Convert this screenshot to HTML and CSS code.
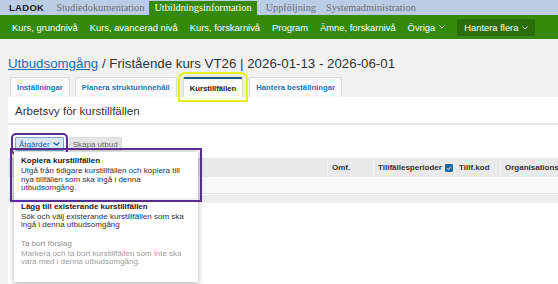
FILE: index.html
```html
<!DOCTYPE html>
<html lang="sv">

<head>
  <meta charset="UTF-8">
  <meta name="viewport" content="width=device-width, initial-scale=1.0">
  <title>Ladok - Utbudsomgång</title>
  <link rel="stylesheet" href="styles.css">
</head>

<body>
  <div class="topbar">
    <span class="logo">LADOK</span>
    <span class="top-tab">Studiedokumentation</span>
    <span class="top-tab active">Utbildningsinformation</span>
    <span class="top-tab">Uppföljning</span>
    <span class="top-tab">Systemadministration</span>
  </div>

  <nav class="mainnav">
    <span class="nav-item">Kurs, grundnivå</span>
    <span class="nav-item">Kurs, avancerad nivå</span>
    <span class="nav-item">Kurs, forskarnivå</span>
    <span class="nav-item">Program</span>
    <span class="nav-item">Ämne, forskarnivå</span>
    <span class="nav-item">Övriga
      <svg class="chev" width="6" height="4" viewBox="0 0 6 4"><path d="M0.5 0.5 L3 3 L5.5 0.5" fill="none" stroke="currentColor" stroke-width="1"/></svg>
    </span>
    <span class="nav-item nav-button">Hantera flera
      <svg class="chev" width="6" height="4" viewBox="0 0 6 4"><path d="M0.5 0.5 L3 3 L5.5 0.5" fill="none" stroke="currentColor" stroke-width="1"/></svg>
    </span>
  </nav>

  <div class="page">
    <h1 class="title"><a href="#" class="crumb">Utbudsomgång</a> / Fristående kurs VT26 | 2026-01-13 - 2026-06-01</h1>

    <div class="tabs">
      <span class="tab">Inställningar</span>
      <span class="tab">Planera strukturinnehåll</span>
      <span class="tab active">Kurstillfällen</span>
      <span class="tab">Hantera beställningar</span>
    </div>

    <div class="panel">
      <h2 class="panel-title">Arbetsvy för kurstillfällen</h2>

      <div class="toolbar">
        <div class="dropdown">
          <button class="btn btn-primary">Åtgärder
            <svg class="chev" width="7" height="4" viewBox="0 0 7 4"><path d="M0.6 0.5 L3.5 3.2 L6.4 0.5" fill="none" stroke="currentColor" stroke-width="1.2"/></svg>
          </button>
          <div class="menu">
            <div class="menu-item selected">
              <div class="menu-title">Kopiera kurstillfällen</div>
              <div class="menu-desc">Utgå från tidigare kurstillfällen och kopiera till nya tillfällen som ska ingå i denna utbudsomgång.</div>
            </div>
            <div class="menu-item">
              <div class="menu-title">Lägg till existerande kurstillfällen</div>
              <div class="menu-desc">Sök och välj existerande kurstillfällen som ska ingå i denna utbudsomgång</div>
            </div>
            <div class="menu-item disabled">
              <div class="menu-title">Ta bort förslag</div>
              <div class="menu-desc">Markera och ta bort kurstillfällen som inte ska vara med i denna utbudsomgång.</div>
            </div>
          </div>
        </div>
        <button class="btn btn-muted">Skapa utbud</button>
      </div>

      <div class="table">
        <div class="thead">
          <div class="th"></div>
          <div class="th">Omf.</div>
          <div class="th">Tillfällesperioder
            <svg class="check" width="8" height="8" viewBox="0 0 8 8"><rect width="8" height="8" rx="1.2" fill="#1f67a3"/><path d="M2 4.2 L3.4 5.6 L6 2.6" fill="none" stroke="#fff" stroke-width="0.9"/></svg>
          </div>
          <div class="th">Tillf.kod</div>
          <div class="th">Organisationsenhet</div>
        </div>
        <div class="row"></div>
        <div class="table-foot"></div>
      </div>
    </div>
  </div>
</body>

</html>
```

FILE: styles.css
```css
body {
  margin: 0;
  padding: 0;
  font-family: 'Liberation Sans', Arial, sans-serif;
  background: #f2f2f2;
  color: #333;
  height: 284px;
  overflow: hidden;
}

/* top application bar */
.topbar {
  display: flex;
  align-items: flex-end;
  height: 15px;
  background: #bacde4;
}

.logo {
  font-weight: bold;
  font-size: 9.5px;
  letter-spacing: 0.3px;
  color: #1c1c1c;
  padding: 0 7px 0 9px;
  line-height: 14px;
}

.top-tab {
  font-family: 'Liberation Serif', serif;
  font-size: 10.3px;
  color: #6b6f78;
  padding: 0 5px;
  line-height: 14px;
  height: 14px;
}

.top-tab.active {
  background: #358a0b;
  color: #fff;
  padding: 0 5px;
  margin-right: 4px;
}

/* green menu */
.mainnav {
  display: flex;
  align-items: center;
  gap: 12px;
  height: 24px;
  padding-left: 12px;
  background: #358a0b;
  color: #fff;
  font-size: 9.4px;
}

.nav-item {
  display: flex;
  align-items: center;
  gap: 4px;
  white-space: nowrap;
}

.nav-button {
  background: #2a6d0b;
  padding: 0 7px;
  height: 17px;
  border-radius: 2px;
  margin-top: 1px;
}

.chev {
  display: block;
}

/* page */
.page {
  padding-left: 8px;
}

.title {
  margin: 16px 0 4px;
  font-size: 13.3px;
  font-weight: normal;
  line-height: 18px;
  color: #333;
}

.crumb {
  color: #1e6db0;
}

.tabs {
  display: flex;
  gap: 5px;
  margin-left: 2px;
  height: 20px;
}

.tab {
  display: flex;
  align-items: center;
  padding: 0 6px;
  font-size: 7.7px;
  font-weight: bold;
  color: #2877b4;
  background: #f9f9f9;
  border: 1px solid #dcdcdc;
  border-bottom: none;
  box-sizing: border-box;
  border-radius: 2px 2px 0 0;
}

.tab.active {
  margin: 0 1px 0 1px;
  background: #fff;
  color: #222;
  border-top: 2px solid #1e5a8a;
  outline: 2px solid #e2ee22;
  outline-offset: 3px;
  box-shadow: 0 0 5px 4px rgba(200, 215, 30, 0.12);
}

.panel {
  background: #fff;
  height: 200px;
}

.panel-title {
  margin: 0;
  padding: 7px 7px 5px;
  font-size: 11.5px;
  font-weight: normal;
  line-height: 14px;
  color: #333;
  border-bottom: 2px solid #e6e6e6;
}

.toolbar {
  display: flex;
  gap: 5px;
  padding: 12px 0 0 7px;
  height: 14px;
}

.dropdown {
  position: relative;
}

.btn {
  display: flex;
  align-items: center;
  gap: 3px;
  height: 14px;
  padding: 0 3px;
  font-family: inherit;
  font-size: 8px;
  border-radius: 1px;
  box-sizing: border-box;
}

.btn-primary {
  background: #d9e8f6;
  border: 1px solid #7aa8d2;
  color: #1c5f9d;
  outline: 2px solid #5b2d8e;
  outline-offset: 2px;
}

.btn-muted {
  background: #e6e6e6;
  border: 1px solid #dcdcdc;
  color: #666;
}

.menu {
  position: absolute;
  top: 15px;
  left: -1px;
  width: 184px;
  padding-bottom: 10px;
  background: #fff;
  box-shadow: 0 2px 6px rgba(0, 0, 0, 0.3);
  z-index: 2;
}

.menu-item {
  padding: 4px 7px 5px;
}

.menu-item.selected {
  outline: 2px solid #5b2d8e;
  outline-offset: 2px;
  box-shadow: 0 0 3px 3px rgba(0, 0, 0, 0.08);
}

.menu-title {
  font-size: 8px;
  font-weight: bold;
  line-height: 10px;
  color: #222;
}

.menu-desc {
  margin-top: 1px;
  font-size: 8px;
  line-height: 8.5px;
  color: #333;
}

.menu-item.disabled .menu-title {
  font-weight: normal;
  color: #8e8e8e;
}

.menu-item.disabled .menu-desc {
  color: #a0a0a0;
}

/* table */
.table {
  margin-top: 7px;
}

.thead {
  display: grid;
  grid-template-columns: 319px 46px 81px 46px 1fr;
  height: 19px;
  background: #e9e9e9;
}

.th {
  display: flex;
  align-items: center;
  gap: 3px;
  padding-left: 4px;
  font-size: 8px;
  font-weight: bold;
  color: #333;
  white-space: nowrap;
  overflow: hidden;
  border-left: 1px solid #f2f2f2;
}

.th:first-child {
  border-left: none;
}

.row {
  height: 16px;
  background: #f8f8f8;
  border-bottom: 1px solid #e2e2e2;
}

.table-foot {
  height: 8px;
  margin-top: 1px;
  background: #efefef;
}
```
